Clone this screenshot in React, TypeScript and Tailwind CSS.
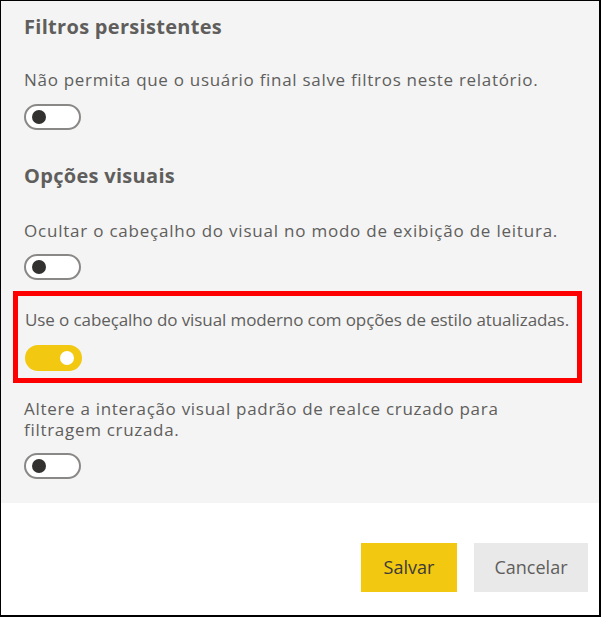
import React, { useState } from 'react';

const Toggle: React.FC<{ on: boolean; onChange: () => void }> = ({ on, onChange }) => (
  <button
    type="button"
    onClick={onChange}
    className={
      on
        ? 'w-[57px] h-[26px] rounded-full bg-[#f2c811] border-2 border-[#f2c811] flex items-center justify-end pr-[6px]'
        : 'w-[57px] h-[26px] rounded-full bg-white border-2 border-[#8a8886] flex items-center justify-start pl-[6px]'
    }
  >
    <span className={on ? 'w-[14px] h-[14px] rounded-full bg-white' : 'w-[14px] h-[14px] rounded-full bg-[#323130]'} />
  </button>
);

const App: React.FC = () => {
  const [persist, setPersist] = useState(false);
  const [hideHeader, setHideHeader] = useState(false);
  const [modernHeader, setModernHeader] = useState(true);
  const [crossFilter, setCrossFilter] = useState(false);

  return (
    <div
      className="w-[601px] h-[617px] flex flex-col bg-white border-black border-t border-l border-r-2 border-b-2 text-[#605e5c]"
      style={{ fontFamily: '"Open Sans", "Noto Sans", sans-serif' }}
    >
      <div className="h-[502px] bg-[#f4f4f4] pl-[23px] pt-[12px] flex flex-col items-start">
        <h2 className="text-[20px] leading-[27px] font-bold tracking-[0.3px]">Filtros persistentes</h2>
        <p className="mt-[29px] text-[17px] leading-[22px] tracking-[0.7px]">Não permita que o usuário final salve filtros neste relatório.</p>
        <div className="mt-[13px]">
          <Toggle on={persist} onChange={() => setPersist(!persist)} />
        </div>

        <h2 className="mt-[32px] text-[20px] leading-[27px] font-bold tracking-[0.3px]">Opções visuais</h2>
        <p className="mt-[31px] text-[17px] leading-[22px] tracking-[0.78px]">Ocultar o cabeçalho do visual no modo de exibição de leitura.</p>
        <div className="mt-[12px]">
          <Toggle on={hideHeader} onChange={() => setHideHeader(!hideHeader)} />
        </div>

        <div className="mt-[11px] -ml-[11px] w-[569px] border-[5px] border-[#ff0000] pl-[7px] pt-[13px] pb-[7px] flex flex-col items-start">
          <p className="text-[17px] leading-[22px] tracking-[-0.1px] whitespace-nowrap">Use o cabeçalho do visual moderno com opções de estilo atualizadas.</p>
          <div className="mt-[14px]">
            <Toggle on={modernHeader} onChange={() => setModernHeader(!modernHeader)} />
          </div>
        </div>

        <p className="mt-[15px] text-[17px] leading-[21px] tracking-[0.7px] w-[540px]">
          Altere a interação visual padrão de realce cruzado para filtragem cruzada.
        </p>
        <div className="mt-[13px]">
          <Toggle on={crossFilter} onChange={() => setCrossFilter(!crossFilter)} />
        </div>
      </div>

      <div className="flex justify-end gap-[17px] pt-[40px] pr-[11px]">
        <button type="button" className="w-[96px] h-[49px] bg-[#f2c811] text-[#3b3a39] text-[18px]">
          Salvar
        </button>
        <button type="button" className="w-[114px] h-[49px] bg-[#e9e9e9] text-[#605e5c] text-[18px]">
          Cancelar
        </button>
      </div>
    </div>
  );
};

export default App;
